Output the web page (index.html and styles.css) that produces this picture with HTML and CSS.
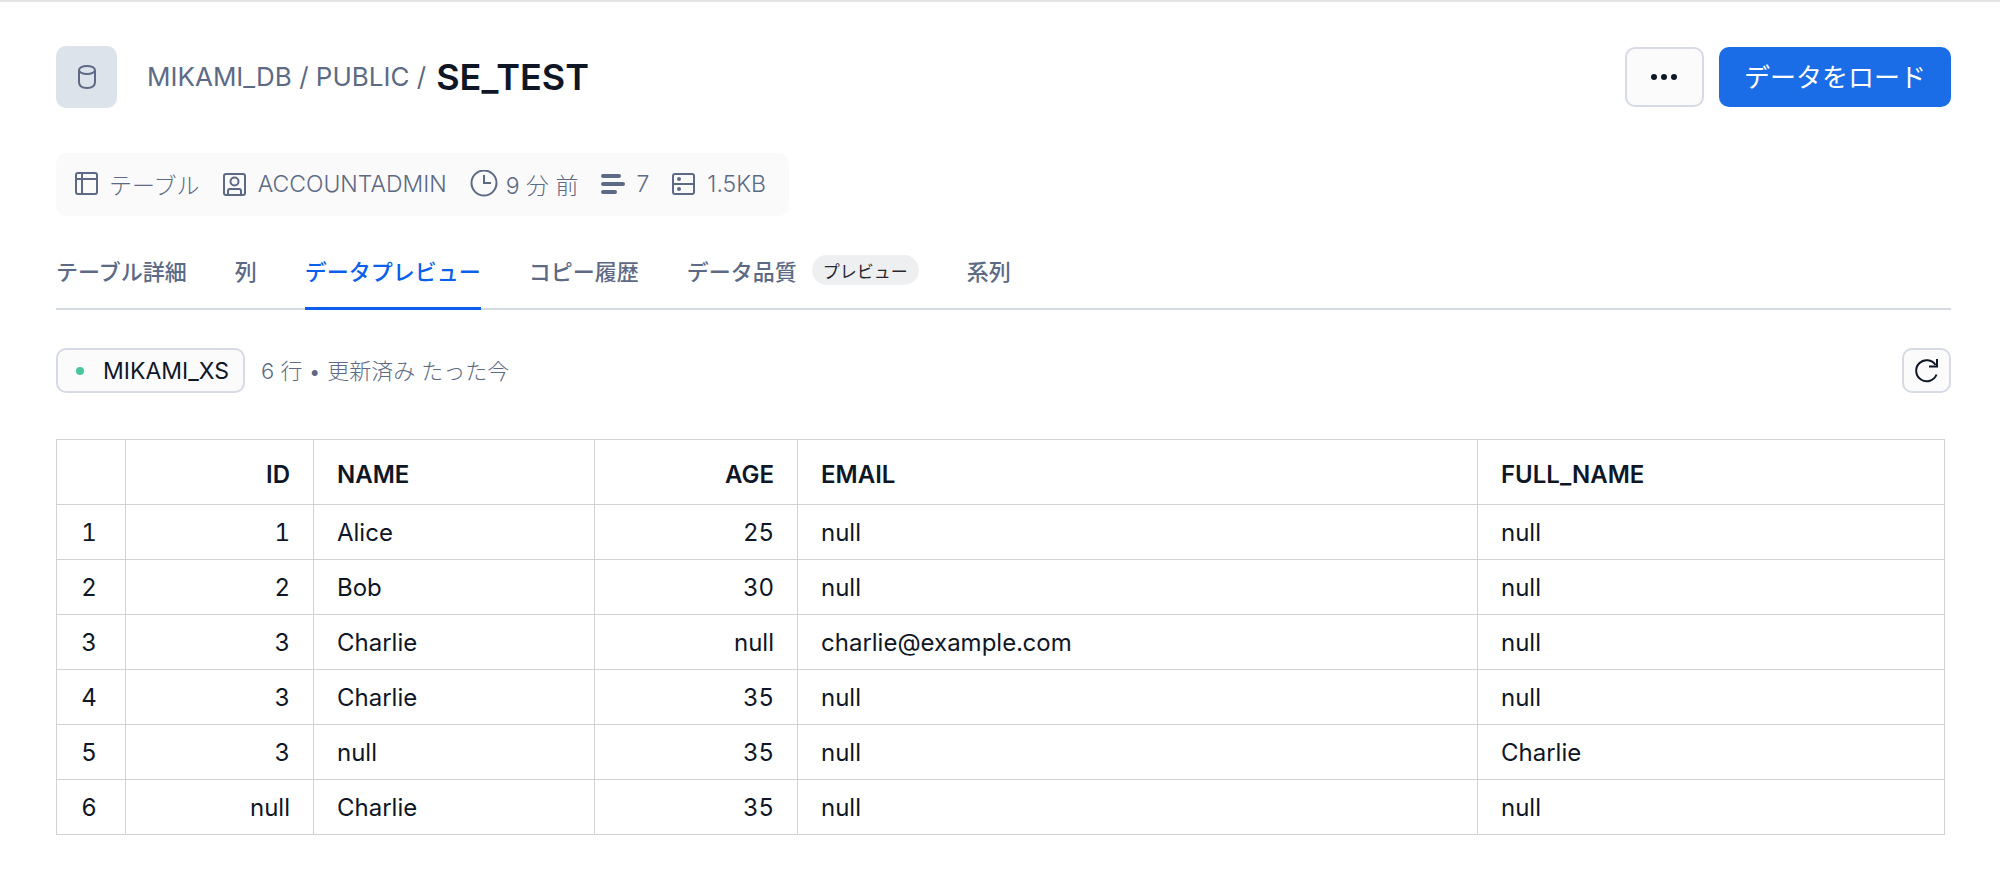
FILE: index.html
```html
<!DOCTYPE html>
<html lang="ja">

<head>
    <meta charset="UTF-8">
    <meta name="viewport" content="width=device-width, initial-scale=1.0">
    <title>SE_TEST</title>
    <link rel="stylesheet" href="styles.css">
</head>

<body>
    <main class="page">
        <header class="header">
            <div class="db-icon">
                <svg width="22" height="26" viewBox="0 0 22 26">
                    <ellipse cx="11" cy="6" rx="8" ry="4"/>
                    <path d="M3 6v12c0 4 3 6 8 6s8-2 8-6V6"/>
                </svg>
            </div>
            <nav class="breadcrumb">
                <a href="#">MIKAMI_DB</a> / <a href="#">PUBLIC</a> /
            </nav>
            <h1>SE_TEST</h1>
            <div class="actions">
                <button class="button more" aria-label="その他">
                    <svg width="28" height="8" viewBox="0 0 28 8">
                        <circle cx="4" cy="4" r="3"/>
                        <circle cx="14" cy="4" r="3"/>
                        <circle cx="24" cy="4" r="3"/>
                    </svg>
                </button>
                <button class="button primary">データをロード</button>
            </div>
        </header>

        <div class="meta">
            <span class="meta-item wide">
                <svg width="24" height="24" viewBox="0 0 24 24">
                    <rect x="2" y="1" width="21" height="21" rx="2"/>
                    <path d="M2 7h21M8 1v21"/>
                </svg>
                テーブル
            </span>
            <span class="meta-item wide">
                <svg width="24" height="24" viewBox="0 0 24 24">
                    <rect x="1" y="2" width="21" height="21" rx="2"/>
                    <circle cx="11.500" cy="9.500" r="4"/>
                    <path d="M5 22v-3q0-2 2-2h9q2 0 2 2v3"/>
                </svg>
                ACCOUNTADMIN
            </span>
            <span class="meta-item">
                <svg width="28" height="28" viewBox="0 0 28 28">
                    <circle cx="14" cy="13" r="12.500"/>
                    <path d="M14 5v8h7"/>
                </svg>
                9 分 前
            </span>
            <span class="meta-item wide">
                <svg class="thick" width="24" height="24" viewBox="0 0 24 24">
                    <path d="M2 4h16M2 12h20M2 20h12"/>
                </svg>
                7
            </span>
            <span class="meta-item wide">
                <svg width="24" height="24" viewBox="0 0 24 24">
                    <rect x="1" y="2" width="21" height="20" rx="2"/>
                    <path d="M1 12h21"/>
                    <circle class="dot" cx="7" cy="7" r="2"/>
                    <circle class="dot" cx="7" cy="17" r="2"/>
                </svg>
                1.5KB
            </span>
        </div>

        <nav class="tabs">
            <button class="tab">テーブル詳細</button>
            <button class="tab">列</button>
            <button class="tab active">データプレビュー</button>
            <button class="tab">コピー履歴</button>
            <button class="tab">データ品質<span class="badge">プレビュー</span></button>
            <button class="tab">系列</button>
        </nav>

        <div class="toolbar">
            <button class="warehouse"><span class="status-dot"></span>MIKAMI_XS</button>
            <span class="status">6 行 • 更新済み たった今</span>
            <button class="refresh" aria-label="更新">
                <svg width="26" height="26" viewBox="0 0 26 26">
                    <path d="M22.500 16.500A10.500 10.500 0 1 1 21.500 7"/>
                    <path d="M23 1v7.500h-8"/>
                </svg>
            </button>
        </div>

        <table class="preview">
            <colgroup>
                <col class="col-row">
                <col class="col-id">
                <col class="col-name">
                <col class="col-age">
                <col>
                <col class="col-full">
            </colgroup>
            <thead>
                <tr>
                    <th></th>
                    <th class="num">ID</th>
                    <th>NAME</th>
                    <th class="num">AGE</th>
                    <th>EMAIL</th>
                    <th>FULL_NAME</th>
                </tr>
            </thead>
            <tbody>
                <tr><td class="row">1</td><td class="num">1</td><td>Alice</td><td class="num">25</td><td>null</td><td>null</td></tr>
                <tr><td class="row">2</td><td class="num">2</td><td>Bob</td><td class="num">30</td><td>null</td><td>null</td></tr>
                <tr><td class="row">3</td><td class="num">3</td><td>Charlie</td><td class="num">null</td><td>charlie@example.com</td><td>null</td></tr>
                <tr><td class="row">4</td><td class="num">3</td><td>Charlie</td><td class="num">35</td><td>null</td><td>null</td></tr>
                <tr><td class="row">5</td><td class="num">3</td><td>null</td><td class="num">35</td><td>null</td><td>Charlie</td></tr>
                <tr><td class="row">6</td><td class="num">null</td><td>Charlie</td><td class="num">35</td><td>null</td><td>null</td></tr>
            </tbody>
        </table>
    </main>
</body>

</html>
```

FILE: styles.css
```css
* {
    box-sizing: border-box;
}

body {
    margin: 0;
    border-top: 2px solid #e3e3e3;
    background-color: #fff;
    color: #0f1726;
    font-family: Inter, "Noto Sans CJK JP", sans-serif;
    font-size: 22px;
}

button {
    font-family: inherit;
    font-size: 22px;
    cursor: pointer;
}

svg {
    display: block;
    flex: none;
    fill: none;
    stroke: currentColor;
    stroke-width: 2;
}

.page {
    padding: 44px 49px 40px 56px;
}

.header {
    display: flex;
    align-items: center;
}

.db-icon {
    display: flex;
    align-items: center;
    justify-content: center;
    width: 61px;
    height: 62px;
    margin-right: 30px;
    border-radius: 10px;
    background-color: #dde3ea;
    color: #5d6a85;
}

.breadcrumb {
    padding-bottom: 2px;
    font-size: 26px;
    color: #5d6a85;
}

.breadcrumb a {
    color: inherit;
    text-decoration: none;
}

h1 {
    margin: 0 0 0 10px;
    font-size: 36px;
    font-weight: 600;
}

.actions {
    display: flex;
    gap: 15px;
    margin-left: auto;
}

.button {
    height: 60px;
    border-radius: 10px;
}

.more {
    display: flex;
    align-items: center;
    justify-content: center;
    width: 79px;
    padding: 0;
    border: 2px solid #d5dae4;
    background-color: #fbfbfb;
    color: #0f1726;
}

.more svg {
    fill: currentColor;
    stroke: none;
}

.primary {
    padding: 0 25px 4px;
    border: none;
    background-color: #1a6ce7;
    color: #fff;
    font-size: 26px;
    font-weight: 400;
}

.meta {
    display: flex;
    align-items: center;
    gap: 23px;
    width: fit-content;
    height: 63px;
    margin-top: 45px;
    padding: 0 23px 2px 18px;
    border-radius: 10px;
    background-color: #fafafa;
    color: #5d6a85;
    font-size: 23px;
    font-weight: 300;
}

.meta-item {
    display: flex;
    align-items: center;
    gap: 8px;
}

.meta-item.wide {
    gap: 11px;
}

.thick {
    stroke-width: 4;
    stroke-linecap: round;
}

.dot {
    fill: currentColor;
    stroke: none;
}

.tabs {
    display: flex;
    gap: 48px;
    height: 69px;
    margin-top: 25px;
    border-bottom: 2px solid #d5d9e0;
}

.tab {
    display: flex;
    align-items: center;
    height: 69px;
    padding: 0 0 12px;
    border: none;
    background: none;
    color: #5d6a85;
    font-weight: 500;
}

.tab.active {
    padding-bottom: 9px;
    border-bottom: 3px solid #0b5fea;
    color: #0b5fea;
}

.badge {
    height: 30px;
    margin-left: 15px;
    padding: 0 11px;
    border-radius: 15px;
    background-color: #eeeff1;
    color: #26292e;
    font-size: 17px;
    font-weight: 400;
    line-height: 34px;
}

.toolbar {
    display: flex;
    align-items: center;
    gap: 16px;
    margin-top: 38px;
}

.warehouse,
.refresh {
    display: flex;
    align-items: center;
    height: 45px;
    border: 2px solid #d5dae4;
    border-radius: 10px;
    background-color: #fbfbfb;
    color: #0f1726;
}

.warehouse {
    padding: 0 14px 0 18px;
    font-size: 23px;
    font-weight: 400;
}

.status-dot {
    width: 8px;
    height: 8px;
    margin-right: 19px;
    border-radius: 50%;
    background-color: #4bc7a0;
}

.status {
    padding-bottom: 4px;
    color: #5d6a85;
    font-weight: 300;
}

.refresh {
    justify-content: center;
    width: 49px;
    margin-left: auto;
    padding: 0;
}

.preview {
    width: calc(100% - 6px);
    margin-top: 46px;
    border-collapse: collapse;
    table-layout: fixed;
    font-size: 24px;
    font-variant-numeric: tabular-nums;
}

.preview th,
.preview td {
    height: 55px;
    padding: 0 23px;
    border: 1px solid #d2d2d2;
    text-align: left;
}

.preview th {
    height: 65px;
    padding-top: 5px;
    font-weight: 600;
}

.preview .num {
    text-align: right;
}

.preview .row {
    padding: 0 4px 0 0;
    text-align: center;
}

.col-row {
    width: 69px;
}

.col-id {
    width: 188px;
}

.col-name {
    width: 281px;
}

.col-age {
    width: 203px;
}

.col-full {
    width: 467px;
}
```
